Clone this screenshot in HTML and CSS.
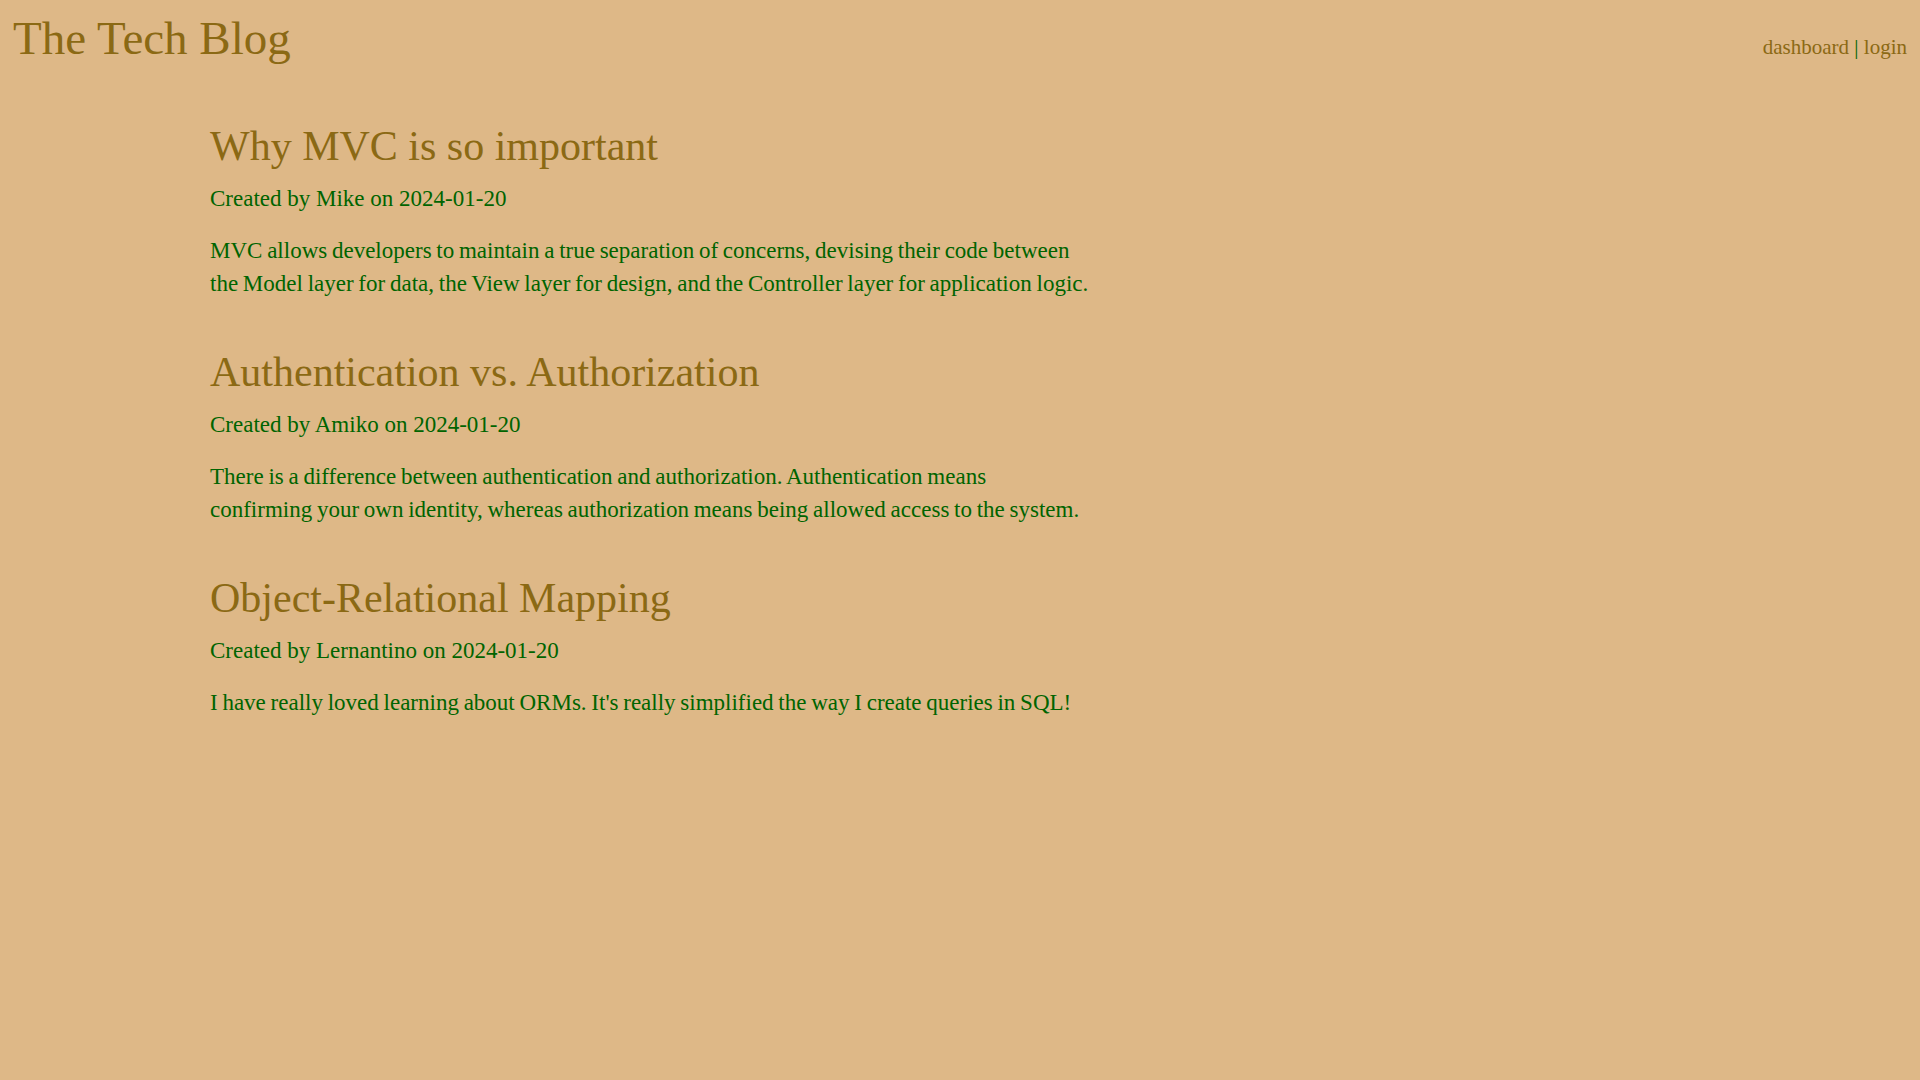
FILE: index.html
```html
<!DOCTYPE html>
<html lang="en">
<head>
<meta charset="utf-8">
<title>The Tech Blog</title>
<link rel="stylesheet" href="styles.css">
</head>
<body>
<header class="site-header">
  <h1 class="site-title">The Tech Blog</h1>
  <nav class="site-nav"><a href="#">dashboard</a> | <a href="#">login</a></nav>
</header>
<main class="posts">
  <article class="post">
    <h2 class="post-title">Why MVC is so important</h2>
    <p class="post-meta">Created by Mike on 2024-01-20</p>
    <p class="post-body">MVC allows developers to maintain a true separation of concerns, devising their code between the Model layer for data, the View layer for design, and the Controller layer for application logic.</p>
  </article>
  <article class="post">
    <h2 class="post-title">Authentication vs. Authorization</h2>
    <p class="post-meta">Created by Amiko on 2024-01-20</p>
    <p class="post-body">There is a difference between authentication and authorization. Authentication means confirming your own identity, whereas authorization means being allowed access to the system.</p>
  </article>
  <article class="post">
    <h2 class="post-title">Object-Relational Mapping</h2>
    <p class="post-meta">Created by Lernantino on 2024-01-20</p>
    <p class="post-body">I have really loved learning about ORMs. It's really simplified the way I create queries in SQL!</p>
  </article>
</main>
</body>
</html>
```
FILE: styles.css
```css
html, body {
  margin: 0;
  padding: 0;
  background: #deb887;
  font-family: "Liberation Serif", "DejaVu Serif", serif;
  min-height: 100vh;
}

.site-header {
  display: flex;
  justify-content: space-between;
  align-items: baseline;
  padding: 10px 13px 0 13px;
}

.site-title {
  margin: 0;
  font-size: 47px;
  line-height: 56px;
  font-weight: normal;
  color: #8b6914;
}

.site-nav {
  font-size: 21px;
  color: #006400;
}

.site-nav a {
  color: #8b6914;
  text-decoration: none;
}

.posts {
  width: 880px;
  margin: 56px 0 0 210px;
  display: flex;
  flex-direction: column;
  gap: 48px;
}

.post-title {
  margin: 0;
  font-size: 42px;
  line-height: 48px;
  font-weight: normal;
  color: #8b6914;
}

.post-meta {
  margin: 12px 0 0 0;
  font-size: 23px;
  line-height: 33px;
  color: #006400;
}

.post-body {
  margin: 19px 0 0 0;
  font-size: 23px;
  line-height: 33px;
  word-spacing: -1px;
  color: #006400;
}
```
